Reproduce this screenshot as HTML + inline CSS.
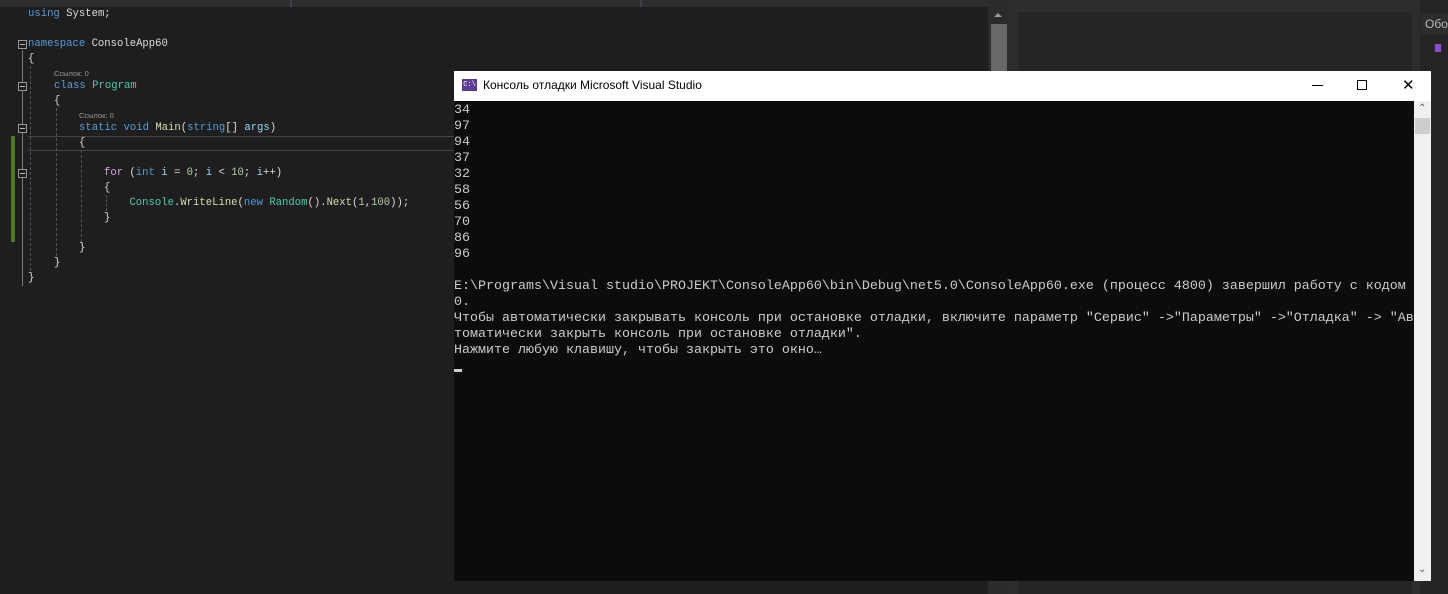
<!DOCTYPE html>
<html><head><meta charset="utf-8"><style>
*{margin:0;padding:0;box-sizing:border-box}
body{width:1448px;height:594px;overflow:hidden;background:#1e1e1e;position:relative;font-family:"Liberation Sans",sans-serif}
.a{position:absolute}
.code{font-family:"Liberation Mono",monospace;font-size:10.6px;color:#dcdcdc;white-space:pre;line-height:15px}
.k{color:#569cd6}.t{color:#4ec9b0}.m{color:#dcdcaa}.n{color:#b5cea8}.v{color:#9cdcfe}.f{color:#d8a0df}
.lens{font-family:"Liberation Sans",sans-serif;font-size:7.5px;color:#999;white-space:pre}
.con{font-family:"Liberation Mono","DejaVu Sans Mono",monospace;font-size:13.33px;color:#cccccc;white-space:pre;line-height:16px}
.box{width:9px;height:9px;border:1px solid #999;background:#1e1e1e}
.box:after{content:"";position:absolute;left:1px;top:3px;width:5px;height:1px;background:#bbb}
</style></head><body>
<div class="a" style="left:0;top:0;width:988px;height:7px;background:#2d2d30"></div>
<div class="a" style="left:290px;top:0;width:2px;height:7px;background:#3f3f46"></div>
<div class="a" style="left:640px;top:0;width:2px;height:7px;background:#3f3f46"></div>
<div class="a" style="left:988px;top:0;width:22px;height:594px;background:#2b2b2e"></div>
<div class="a" style="left:991px;top:24px;width:16px;height:60px;background:#686868"></div>
<div class="a" style="left:994px;top:13px;width:0;height:0;border-left:4px solid transparent;border-right:4px solid transparent;border-bottom:4px solid #999"></div>
<div class="a" style="left:1010px;top:0;width:8px;height:594px;background:#2d2d30"></div>
<div class="a" style="left:1018px;top:0;width:394px;height:594px;background:#252526"></div>
<div class="a" style="left:1018px;top:0;width:394px;height:12px;background:#2d2d30"></div>
<div class="a" style="left:1412px;top:0;width:8px;height:594px;background:#2d2d30"></div>
<div class="a" style="left:1420px;top:0;width:28px;height:594px;background:#252526"></div>
<div class="a" style="left:1421px;top:14px;width:27px;height:20px;background:#2d2d30;color:#bbb;font-size:12px;line-height:20px;padding-left:4px">Обо</div>
<div class="a" style="left:1435px;top:44px;width:6px;height:8px;background:#8a4fd0"></div>
<div class="a" style="left:11px;top:136px;width:4px;height:106px;background:#4f7a28"></div>
<div class="a" style="left:28px;top:150px;width:426px;height:1px;background:#464646"></div>
<div class="a" style="left:28px;top:136px;width:426px;height:1px;background:#464646"></div>
<div class="a" style="left:22px;top:50px;width:1px;height:236px;background:#777"></div>
<div class="a box" style="left:18px;top:40px"></div>
<div class="a box" style="left:18px;top:82px"></div>
<div class="a box" style="left:18px;top:124px"></div>
<div class="a box" style="left:18px;top:169px"></div>
<div class="a" style="left:30px;top:66px;width:0;height:205px;border-left:1px dashed #555"></div>
<div class="a" style="left:56px;top:108px;width:0;height:148px;border-left:1px dashed #555"></div>
<div class="a" style="left:81px;top:150px;width:0;height:92px;border-left:1px dashed #555"></div>
<div class="a" style="left:106px;top:195px;width:0;height:16px;border-left:1px dashed #555"></div>
<div class="a code" style="left:28px;top:7px"><span class="k">using</span> System;</div>
<div class="a code" style="left:28px;top:37px"><span class="k">namespace</span> ConsoleApp60
{</div>
<div class="a lens" style="left:54px;top:69px">Ссылок: 0</div>
<div class="a code" style="left:54px;top:79px"><span class="k">class</span> <span class="t">Program</span>
{</div>
<div class="a lens" style="left:79px;top:111px">Ссылок: 0</div>
<div class="a code" style="left:79px;top:121px"><span class="k">static</span> <span class="k">void</span> <span class="m">Main</span>(<span class="k">string</span>[] <span class="v">args</span>)
{</div>
<div class="a code" style="left:104px;top:166px"><span class="f">for</span> (<span class="k">int</span> <span class="v">i</span> = <span class="n">0</span>; <span class="v">i</span> &lt; <span class="n">10</span>; <span class="v">i</span>++)
{
    <span class="t">Console</span>.<span class="m">WriteLine</span>(<span class="k">new</span> <span class="t">Random</span>().<span class="m">Next</span>(<span class="n">1</span>,<span class="n">100</span>));
}</div>
<div class="a code" style="left:79px;top:241px">}</div>
<div class="a code" style="left:54px;top:256px">}</div>
<div class="a code" style="left:28px;top:271px">}</div>
<div class="a" style="left:454px;top:71px;width:977px;height:510px;background:#0c0c0c"></div>
<div class="a" style="left:454px;top:71px;width:977px;height:30px;background:#fff"></div>
<div class="a" style="left:462px;top:79px;width:15px;height:12px;background:#5c3d96;color:#fff;font-size:7px;line-height:12px;text-align:center;font-family:'Liberation Mono',monospace">C:\</div>
<div class="a" style="left:483px;top:78px;font-size:12px;color:#000">Консоль отладки Microsoft Visual Studio</div>
<div class="a" style="left:1312px;top:85px;width:11px;height:1px;background:#000"></div>
<div class="a" style="left:1357px;top:80px;width:10px;height:10px;border:1px solid #000"></div>
<div class="a" style="left:1402px;top:78px;font-size:15px;color:#000;line-height:15px">✕</div>
<div class="a" style="left:1414px;top:101px;width:17px;height:480px;background:#f0f0f0"></div>
<div class="a" style="left:1415px;top:118px;width:15px;height:16px;background:#cdcdcd"></div>
<div class="a" style="left:1418px;top:103px;font-size:10px;color:#606060">⌃</div>
<div class="a" style="left:1418px;top:564px;font-size:10px;color:#606060">⌄</div>
<div class="a con" style="left:454px;top:103px">34
97
94
37
32
58
56
70
86
96

E:\Programs\Visual studio\PROJEKT\ConsoleApp60\bin\Debug\net5.0\ConsoleApp60.exe (процесс 4800) завершил работу с кодом
0.
Чтобы автоматически закрывать консоль при остановке отладки, включите параметр "Сервис" -&gt;"Параметры" -&gt;"Отладка" -&gt; "Ав
томатически закрыть консоль при остановке отладки".
Нажмите любую клавишу, чтобы закрыть это окно…</div>
<div class="a" style="left:454px;top:369px;width:8px;height:3px;background:#ccc"></div>
</body></html>
